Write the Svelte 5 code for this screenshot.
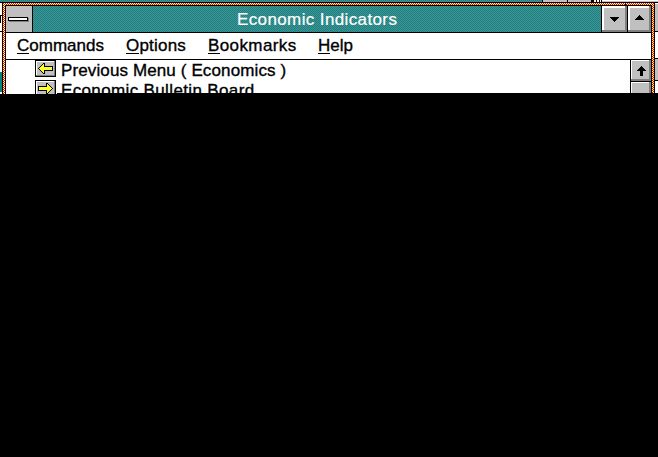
<script>
  const menus = [
    { label: 'Commands', width: 109, gap: 0 },
    { label: 'Options', width: 82, gap: 0.2 },
    { label: 'Bookmarks', width: 110, gap: 0.4 },
    { label: 'Help', width: 40, gap: 0 }
  ];
  const rows = [
    { label: 'Previous Menu ( Economics )', dir: 'back', gap: 0.12 },
    { label: 'Economic Bulletin Board', dir: 'forward', gap: 0.36 }
  ];
  const arrow = [
    '.....##',
    '....#y#',
    '...#yy#',
    '..#yyy#########',
    '.#yyyyyyyyyyyy#',
    '#yyyyyyyyyyyyy#',
    '.#yyyyyyyyyyyy#',
    '..#yyy#########',
    '...#yy#',
    '....#y#',
    '.....##'
  ];
  const pixels = arrow.flatMap((line, y) =>
    [...line].map((c, x) => ({ x: x + 3, y: y + 3, c })).filter((p) => p.c !== '.')
  );
  const shade = (p) => (p.c === '#' ? '#000' : (p.x + p.y) % 2 ? '#ffff60' : '#ff0');
</script>

<div class="screen">
  <div class="desktop">
    <svg class="behind" width="658" height="94" shape-rendering="crispEdges">
      <defs>
        <pattern id="teal" width="2" height="2" patternUnits="userSpaceOnUse">
          <rect width="2" height="2" fill="#008c8c" />
          <rect width="1" height="1" fill="#5c8888" /><rect x="1" y="1" width="1" height="1" fill="#5c8888" />
        </pattern>
        <pattern id="frame" x="3" y="3" width="2" height="2" patternUnits="userSpaceOnUse">
          <rect width="2" height="2" fill="#f00" />
          <rect x="1" width="1" height="1" fill="#fff" /><rect y="1" width="1" height="1" fill="#ff0" />
        </pattern>
      </defs>
      <rect width="658" height="94" fill="#fff" />
      <rect width="542" height="2" fill="url(#teal)" />
      <rect y="2" width="2" height="1" />
      <rect y="15" width="2" height="1" /><rect y="31" width="2" height="1" />
      <rect x="0" y="16" width="1" height="7" />
      <rect y="72" width="2" height="20" fill="#008080" />
      <rect x="542" width="50" height="2" fill="#c0c0c0" />
      <rect x="542" width="1" height="2" /><rect x="567" width="1" height="2" />
      <rect x="591" width="3" height="2" /><rect x="596" width="1" height="2" /><rect x="599" width="1" height="2" /><rect x="601" width="1" height="2" />
      <rect x="594" width="1" height="1" fill="#ff0" />
      <rect x="602" y="1" width="56" height="1" fill="#c0c0c0" />
      <rect x="655" y="2" width="3" height="1" />
      <rect x="655" y="4" width="3" height="27" fill="#c0c0c0" />
      <rect x="655" y="31" width="3" height="1" />
      <rect x="655" y="58" width="3" height="1" />
      <rect x="655" y="59" width="3" height="21" fill="#c0c0c0" />
      <rect x="655" y="80" width="3" height="1" />
      <rect x="2" y="2" width="653" height="92" />
      <rect x="3" y="3" width="651" height="91" fill="url(#frame)" />
      <rect x="625" y="3" width="1" height="2" />
    </svg>
    <div class="window">
      <div class="inner">
        <div class="title">
          <div class="sys"><i></i></div>
          <div class="caption"><span>Economic Indicators</span></div>
          <div class="btn min"><svg width="9" height="5" shape-rendering="crispEdges"><path d="M0 0h9v1H0zM1 1h7v1H1zM2 2h5v1H2zM3 3h3v1H3zM4 4h1v1H4z" /></svg></div>
          <div class="btn max"><svg width="9" height="5" shape-rendering="crispEdges"><path d="M0 4h9v1H0zM1 3h7v1H1zM2 2h5v1H2zM3 1h3v1H3zM4 0h1v1H4z" /></svg></div>
        </div>
        <div class="menu">
          {#each menus as m}
            <span style="width:{m.width}px;letter-spacing:{m.gap}px"><u>{m.label[0]}</u>{m.label.slice(1)}</span>
          {/each}
        </div>
        <div class="body">
          <div class="list">
            {#each rows as r}
              <div class="row">
                <svg class="icon" width="21" height="17" shape-rendering="crispEdges">
                  <rect width="21" height="17" />
                  <rect x="1" y="1" width="19" height="15" fill="#808080" />
                  <rect x="1" y="1" width="18" height="14" fill="#fff" />
                  <rect x="2" y="2" width="17" height="13" fill="#c0c0c0" />
                  <g transform={r.dir === 'forward' ? 'translate(21 0) scale(-1 1)' : undefined}>
                    {#each pixels as p}
                      <rect x={p.x} y={p.y} width="1" height="1" fill={shade(p)} />
                    {/each}
                  </g>
                </svg>
                <span style="letter-spacing:{r.gap}px">{r.label}</span>
              </div>
            {/each}
          </div>
          <div class="scroll">
            <div class="up"><svg width="9" height="10" shape-rendering="crispEdges"><path d="M4 0h1v1h1v1h1v1h1v1h1v1H6v5H3V5H0V4h1V3h1V2h1V1h1z" /></svg></div>
            <div class="thumb"></div>
          </div>
        </div>
      </div>
    </div>
    <div class="shade"></div>
  </div>
</div>

<style>
  .screen {
    width: 658px;
    height: 457px;
    background: #000;
    overflow: hidden;
    font: 400 17px/20px "Liberation Sans", Arial, sans-serif;
    color: #000;
    -webkit-text-stroke: 0.35px currentColor;
  }
  .desktop {
    display: grid;
    grid-template: 94px / 658px;
    overflow: hidden;
  }
  .behind, .window, .shade { grid-area: 1 / 1; }
  svg { display: block; -webkit-text-stroke: 0; }
  .shade {
    align-self: end;
    height: 1px;
    margin-left: 57px;
    background: #000;
    z-index: 1;
  }
  .window {
    box-sizing: border-box;
    width: 653px;
    height: 92px;
    margin: 2px 0 0 2px;
    padding: 3px;
  }
  .inner {
    border: 1px solid #000;
    border-bottom: 0;
    background: #fff;
  }
  .title {
    display: flex;
    height: 26px;
    border-bottom: 1px solid #000;
  }
  .sys {
    width: 26px;
    background: #c0c0c0;
    border-right: 1px solid #000;
    display: flex;
  }
  .sys i {
    box-sizing: border-box;
    width: 20px;
    height: 4px;
    margin: 11px 0 0 2px;
    border: 1px solid #000;
    background: #fff;
    box-shadow: 1px 1px #808080;
  }
  .caption {
    flex: 1;
    background: repeating-conic-gradient(#008c8c 0 25%, #5c8888 0 50%) 0 0 / 2px 2px;
    color: #fff;
    padding: 4px 0 0 204px;
    white-space: nowrap;
    letter-spacing: 0.38px;
    -webkit-text-stroke-width: 0.2px;
  }
  .btn {
    box-sizing: border-box;
    width: 26px;
    border-left: 1px solid #000;
    background: #c0c0c0;
    box-shadow: inset -2px -2px #808080, inset 2px 2px #fff;
    display: flex;
    justify-content: center;
    padding-top: 11px;
  }
  .max { width: 24px; padding-top: 9px; }
  .menu {
    display: flex;
    height: 26px;
    padding: 3px 0 0 11px;
    box-sizing: border-box;
  }
  u {
    text-decoration: none;
    display: inline-block;
    height: 17px;
    border-bottom: 1px solid #000;
  }
  .body {
    display: flex;
    height: 34px;
    border-top: 1px solid #000;
  }
  .list { flex: 1; }
  .row {
    display: flex;
    height: 20px;
    padding-left: 29px;
    white-space: nowrap;
  }
  .row span { padding: 1px 0 0 5px; }
  .scroll {
    width: 20px;
    border-left: 1px solid #000;
  }
  .up, .thumb {
    box-sizing: border-box;
    background: #c0c0c0;
    display: flex;
    justify-content: center;
  }
  .up {
    height: 22px;
    padding-top: 6px;
    border-bottom: 1px solid #000;
    box-shadow: inset -2px -2px #808080, inset 1px 1px #fff;
  }
  .thumb {
    height: 12px;
    box-shadow: inset -2px 0 #808080, inset 1px 1px #fff;
  }
</style>
